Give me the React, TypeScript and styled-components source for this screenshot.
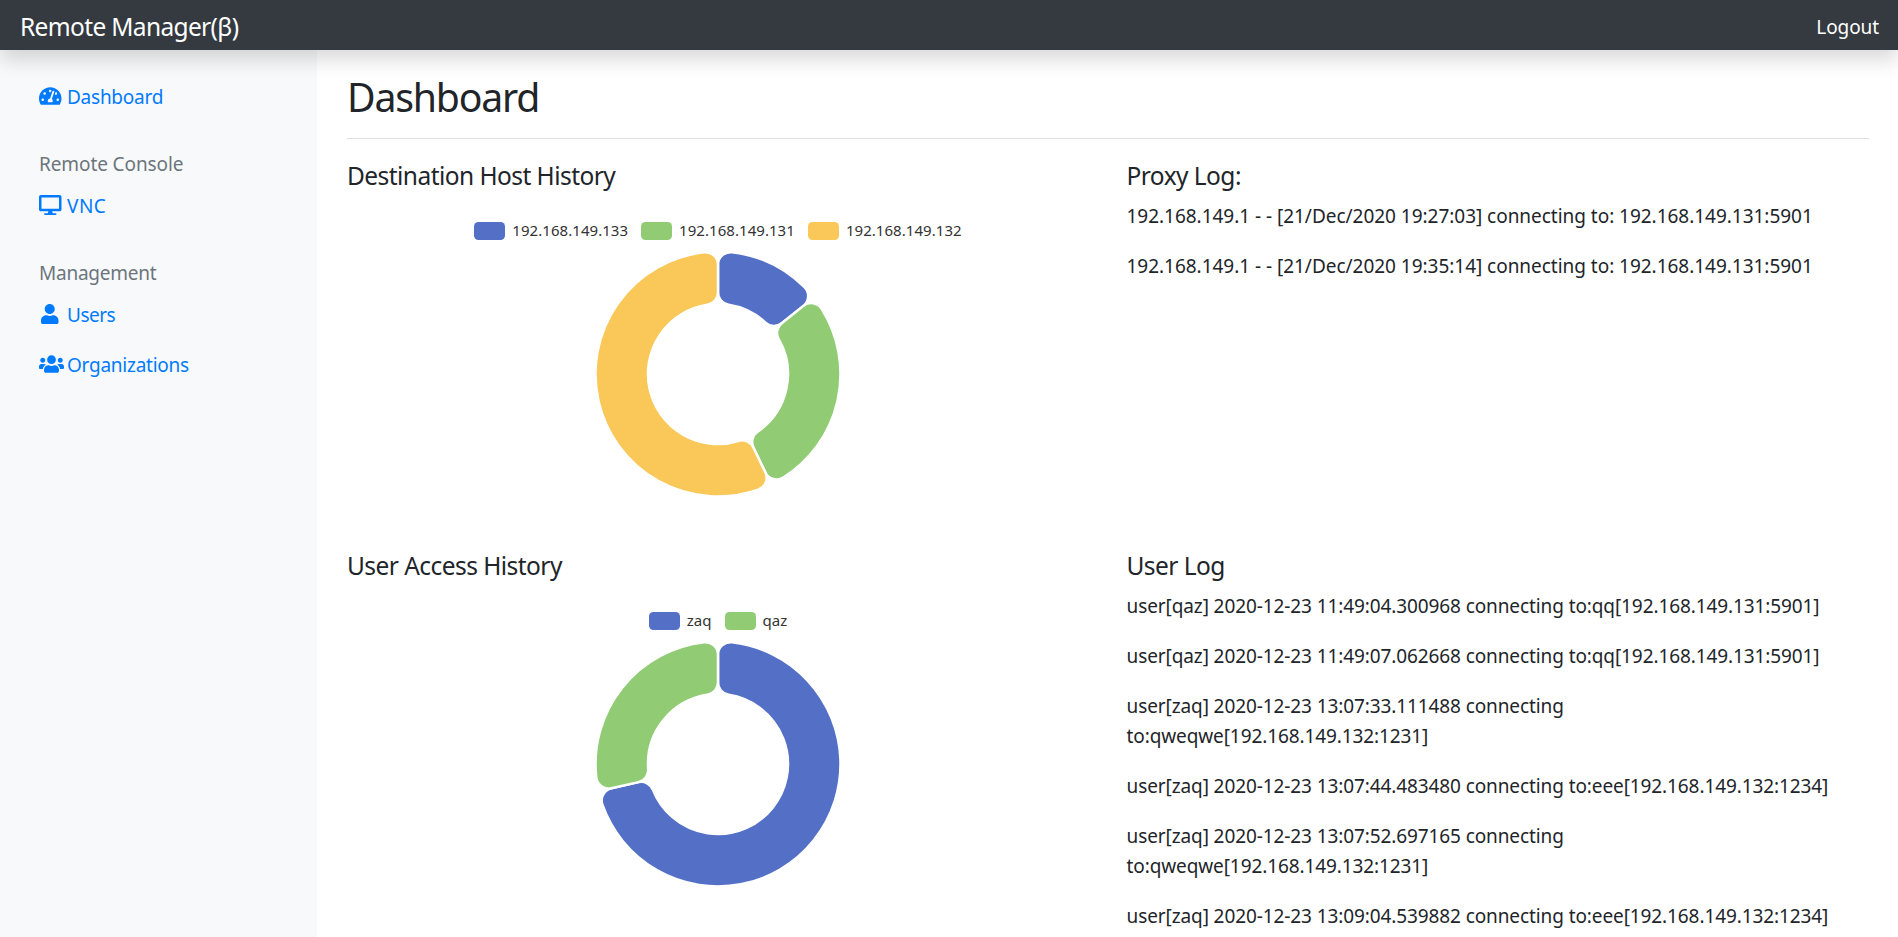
import React from "react";
import styled, { createGlobalStyle } from "styled-components";
import { FaDesktop, FaTachometerAlt, FaUser, FaUsers } from "react-icons/fa";

const GlobalStyle = createGlobalStyle`
  *, *::before, *::after { box-sizing: border-box; }
  html, body { margin: 0; height: 100%; overflow: hidden; }
  body {
    font-family: "Noto Sans", "Open Sans", sans-serif;
    font-size: 19px;
    line-height: 30px;
    color: #212529;
    background: #fff;
  }
`;

const Page = styled.div`
  display: flex;
  flex-direction: column;
  height: 937px;
  overflow: hidden;
`;

const TopBar = styled.header`
  position: relative;
  z-index: 2;
  display: flex;
  flex: none;
  align-items: center;
  justify-content: space-between;
  height: 50px;
  padding: 4px 19px 0 20px;
  color: #fff;
  background: #343a40;
  box-shadow: 0 10px 20px rgba(0, 0, 0, 0.15);
`;

const Brand = styled.a`
  font-size: 24.5px;
  letter-spacing: -0.65px;
`;

const Logout = styled.a`
  letter-spacing: -0.1px;
`;

const Body = styled.div`
  display: flex;
  flex: 1;
  min-height: 0;
`;

const Sidebar = styled.nav`
  flex: none;
  width: 317px;
  padding: 22px 39px 0;
  background: #f8f9fa;
`;

const NavLink = styled.a<{ $tracking?: number }>`
  display: flex;
  align-items: center;
  height: 50px;
  letter-spacing: ${(p) => p.$tracking ?? -0.25}px;
  color: #007bff;
`;

const NavIcon = styled.span<{ $width: number; $inset?: number }>`
  display: flex;
  flex: none;
  width: 28px;
  padding-left: ${(p) => p.$inset ?? 0}px;
  margin-top: -2px;

  svg {
    flex: none;
    width: ${(p) => p.$width}px;
    height: 20px;
  }
`;

const NavHeading = styled.h6<{ $tracking: number }>`
  margin: 30px 0 5px;
  font-size: 19px;
  font-weight: 400;
  line-height: 24px;
  letter-spacing: ${(p) => p.$tracking}px;
  color: #6c757d;
`;

const Main = styled.main`
  flex: 1;
  min-width: 0;
  padding: 20px 29px 0 30px;
`;

const TitleBar = styled.div`
  height: 69px;
  margin-bottom: 20px;
  border-bottom: 1px solid #dee2e6;
`;

const Title = styled.h1`
  margin: 0;
  padding-top: 2px;
  font-size: 39.2px;
  font-weight: 400;
  line-height: 49px;
  letter-spacing: -1.2px;
`;

const Row = styled.section`
  display: grid;
  grid-template-columns: 741px 1fr;
  column-gap: 38.5px;
  height: 390px;
`;

const SectionTitle = styled.h5`
  margin: 0 0 10px;
  padding-top: 2px;
  font-size: 24.5px;
  font-weight: 400;
  line-height: 30px;
  height: 30px;
  letter-spacing: -0.55px;
`;

const Chart = styled.div`
  display: flex;
  flex-direction: column;
  align-items: center;
  height: 350px;
  padding: 23px 0 0 1px;
`;

const Legend = styled.div`
  display: flex;
  gap: 13px;
  height: 18px;
  margin-bottom: 11px;
`;

const LegendItem = styled.div`
  display: flex;
  align-items: center;
  gap: 7px;
  font-size: 15px;
  line-height: 18px;
  color: #333;
`;

const LegendLabel = styled.span`
  margin-top: -2px;
  letter-spacing: 0.05px;
`;

const Swatch = styled.i<{ $color: string }>`
  width: 31px;
  height: 18px;
  border-radius: 4.4px;
  background: ${(p) => p.$color};
`;

const Log = styled.div<{ $tracking: number }>`
  padding-top: 2px;
  letter-spacing: ${(p) => p.$tracking}px;
`;

const LogLine = styled.p`
  margin: 0 0 20px;
`;

const OUTER = 122.5;
const INNER = 70;
const CORNER = 12.5;
const SIZE = 246;

type Slice = { name: string; value: number; color: string };

const at = (radius: number, angle: number) =>
  `${(SIZE / 2 + radius * Math.sin(angle)).toFixed(2)} ${(SIZE / 2 - radius * Math.cos(angle)).toFixed(2)}`;

/* Ring sector whose four corners are circles tangent to the arc and the radial edge. */
function sectorPath(start: number, end: number) {
  const outerTurn = Math.asin(CORNER / (OUTER - CORNER));
  const innerTurn = Math.asin(CORNER / (INNER + CORNER));
  const outerEdge = Math.sqrt((OUTER - CORNER) ** 2 - CORNER ** 2);
  const innerEdge = Math.sqrt((INNER + CORNER) ** 2 - CORNER ** 2);
  const corner = `A ${CORNER} ${CORNER} 0 0 1`;
  const bigOuter = end - start - 2 * outerTurn > Math.PI ? 1 : 0;
  const bigInner = end - start - 2 * innerTurn > Math.PI ? 1 : 0;
  return [
    `M ${at(outerEdge, start)}`,
    `${corner} ${at(OUTER, start + outerTurn)}`,
    `A ${OUTER} ${OUTER} 0 ${bigOuter} 1 ${at(OUTER, end - outerTurn)}`,
    `${corner} ${at(outerEdge, end)}`,
    `L ${at(innerEdge, end)}`,
    `${corner} ${at(INNER, end - innerTurn)}`,
    `A ${INNER} ${INNER} 0 ${bigInner} 0 ${at(INNER, start + innerTurn)}`,
    `${corner} ${at(innerEdge, start)}`,
    "Z",
  ].join(" ");
}

function Donut({ slices }: { slices: Slice[] }) {
  const total = slices.reduce((sum, s) => sum + s.value, 0);
  let angle = 0;
  return (
    <Chart>
      <Legend>
        {slices.map((s) => (
          <LegendItem key={s.name}>
            <Swatch $color={s.color} />
            <LegendLabel>{s.name}</LegendLabel>
          </LegendItem>
        ))}
      </Legend>
      <svg width={SIZE} height={SIZE} viewBox={`0 0 ${SIZE} ${SIZE}`}>
        {slices.map((s) => {
          const start = angle;
          angle += (s.value / total) * Math.PI * 2;
          return (
            <path key={s.name} d={sectorPath(start, angle)} fill={s.color} stroke="#fff" strokeWidth={2.5} />
          );
        })}
      </svg>
    </Chart>
  );
}

const hosts: Slice[] = [
  { name: "192.168.149.133", value: 1, color: "#5470c6" },
  { name: "192.168.149.131", value: 2, color: "#91cc75" },
  { name: "192.168.149.132", value: 4, color: "#fac858" },
];

const users: Slice[] = [
  { name: "zaq", value: 5, color: "#5470c6" },
  { name: "qaz", value: 2, color: "#91cc75" },
];

const proxyLog = [
  "192.168.149.1 - - [21/Dec/2020 19:27:03] connecting to: 192.168.149.131:5901",
  "192.168.149.1 - - [21/Dec/2020 19:35:14] connecting to: 192.168.149.131:5901",
];

const userLog = [
  "user[qaz] 2020-12-23 11:49:04.300968 connecting to:qq[192.168.149.131:5901]",
  "user[qaz] 2020-12-23 11:49:07.062668 connecting to:qq[192.168.149.131:5901]",
  "user[zaq] 2020-12-23 13:07:33.111488 connecting to:qweqwe[192.168.149.132:1231]",
  "user[zaq] 2020-12-23 13:07:44.483480 connecting to:eee[192.168.149.132:1234]",
  "user[zaq] 2020-12-23 13:07:52.697165 connecting to:qweqwe[192.168.149.132:1231]",
  "user[zaq] 2020-12-23 13:09:04.539882 connecting to:eee[192.168.149.132:1234]",
];

export default function App() {
  return (
    <Page>
      <GlobalStyle />
      <TopBar>
        <Brand>Remote Manager(β)</Brand>
        <Logout>Logout</Logout>
      </TopBar>
      <Body>
        <Sidebar>
          <NavLink>
            <NavIcon $width={22.5}><FaTachometerAlt /></NavIcon>
            Dashboard
          </NavLink>
          <NavHeading $tracking={-0.1}>Remote Console</NavHeading>
          <NavLink $tracking={0.5}>
            <NavIcon $width={22.5}><FaDesktop /></NavIcon>
            VNC
          </NavLink>
          <NavHeading $tracking={-0.25}>Management</NavHeading>
          <NavLink $tracking={-0.5}>
            <NavIcon $width={17.5} $inset={2}><FaUser /></NavIcon>
            Users
          </NavLink>
          <NavLink>
            <NavIcon $width={25}><FaUsers /></NavIcon>
            Organizations
          </NavLink>
        </Sidebar>
        <Main>
          <TitleBar>
            <Title>Dashboard</Title>
          </TitleBar>
          <Row>
            <div>
              <SectionTitle>Destination Host History</SectionTitle>
              <Donut slices={hosts} />
            </div>
            <div>
              <SectionTitle>Proxy Log:</SectionTitle>
              <Log $tracking={-0.03}>
                {proxyLog.map((line) => <LogLine key={line}>{line}</LogLine>)}
              </Log>
            </div>
          </Row>
          <Row>
            <div>
              <SectionTitle>User Access History</SectionTitle>
              <Donut slices={users} />
            </div>
            <div>
              <SectionTitle>User Log</SectionTitle>
              <Log $tracking={-0.1}>
                {userLog.map((line) => <LogLine key={line}>{line}</LogLine>)}
              </Log>
            </div>
          </Row>
        </Main>
      </Body>
    </Page>
  );
}
